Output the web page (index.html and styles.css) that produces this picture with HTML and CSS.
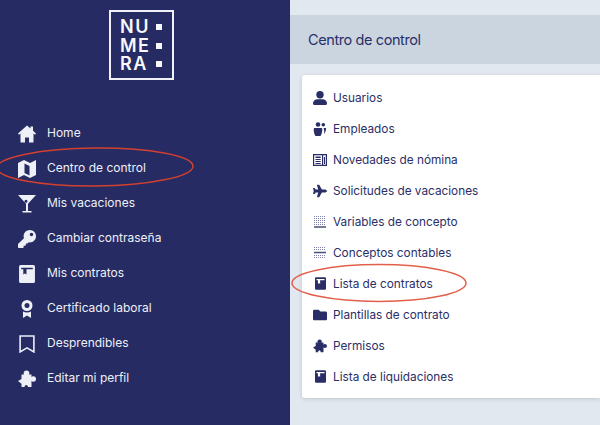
FILE: index.html
```html
<!DOCTYPE html>
<html lang="es">
<head>
    <meta charset="UTF-8">
    <title>Centro de control</title>
    <link rel="stylesheet" href="styles.css">
</head>
<body>
    <svg width="0" height="0" class="defs">
        <symbol id="i-home" viewBox="0 0 18 17"><path d="M9 0l3.500 3V1h2.500v4.300L18 8l-1 1.200-1.500-1.200v9H11v-5H7v5H2.500V8L1 9.200 0 8z"/></symbol>
        <symbol id="i-map" viewBox="0 0 18 18"><path fill-rule="evenodd" d="M0 3l6-3 6 3 6-3v15l-6 3-6-3-6 3zM6.500 3.500v9.500l5 2.500V6z"/></symbol>
        <symbol id="i-glass" viewBox="0 0 18 18"><path fill-rule="evenodd" d="M0 0h18l-8 8.800V16h3.500v1.500h-9V16H8V8.800zM8 4.800a1.500 1.500 0 1 0 0 3 1.500 1.500 0 0 0 0-3z"/></symbol>
        <symbol id="i-key" viewBox="0 0 512 512"><path d="M512 176.001C512 273.203 433.202 352 336 352c-11.22 0-22.19-1.062-32.827-3.069l-24.012 27.014A23.999 23.999 0 0 1 261.223 384H224v40c0 13.255-10.745 24-24 24h-40v40c0 13.255-10.745 24-24 24H24c-13.255 0-24-10.745-24-24v-78.059c0-6.365 2.529-12.47 7.029-16.971l161.802-161.802C163.108 213.814 160 195.271 160 176 160 78.798 238.797.001 335.999 0 433.488-.001 512 78.511 512 176.001zM336 128c0 26.51 21.49 48 48 48s48-21.49 48-48-21.49-48-48-48-48 21.49-48 48z"/></symbol>
        <symbol id="i-book" viewBox="0 0 15 17"><path fill-rule="evenodd" d="M1.500 0h12A1.500 1.500 0 0 1 15 1.500v14a1.500 1.500 0 0 1-1.500 1.500h-12A1.500 1.500 0 0 1 0 15.500v-14A1.500 1.500 0 0 1 1.500 0zM2 2.500V4h2v5l1.500-1L7 9V4h6V2.500z"/></symbol>
        <symbol id="i-award" viewBox="0 0 12 18"><path fill-rule="evenodd" d="M6 0a5.500 5.500 0 1 1 0 11A5.500 5.500 0 0 1 6 0zm0 3a2.500 2.500 0 1 0 0 5 2.500 2.500 0 0 0 0-5z"/><path d="M2 11.500c2.500 1.200 5.500 1.200 8 0V18l-4-2.500L2 18z"/></symbol>
        <symbol id="i-bookmark" viewBox="0 0 15 17"><path fill="none" stroke="currentColor" stroke-width="1.500" d="M1 1h13v15l-6.500-3.800L1 16z"/></symbol>
        <symbol id="i-puzzle" viewBox="0 0 18 17"><circle cx="8.500" cy="2.800" r="2.800"/><circle cx="15.300" cy="8.500" r="2.700"/><path d="M0 10.500l3.500-2V4h10v12.500H10c0-2.800-3.500-2.800-3.500 0h-3v-3.300z"/></symbol>
        <symbol id="i-user" viewBox="0 0 14 14"><circle cx="7" cy="3.700" r="3.700"/><path d="M0 12.500C0 9.800 2.300 8.300 5 8.300h4c2.700 0 5 1.500 5 4.200 0 .9-.6 1.500-1.500 1.500h-11C.6 14 0 13.400 0 12.500z"/></symbol>
        <symbol id="i-users" viewBox="0 0 14 14"><circle cx="5" cy="2.500" r="2.300"/><circle cx="10.300" cy="2.800" r="1.800"/><path d="M2 6h6c.8 0 1.300.5 1.300 1.200 0 3-1.100 6.800-2.300 6.800H3c-1.200 0-2.300-3.800-2.300-6.800C.7 6.500 1.200 6 2 6zM10.500 6h1.800c.6 0 .9.400.8.900-.3 1.900-.9 4-2 5.100.3-2 .3-4.200-.6-6z"/></symbol>
        <symbol id="i-news" viewBox="0 0 14 14"><path fill-rule="evenodd" d="M0 1h14v12H0zM1.200 2.200v9.600h7.800V2.200zM10.200 2.200v9.600h2.600V2.200z"/><path d="M2.500 3.500h5.200v1.500H2.500zM2.500 6h5.200v1H2.500zM2.500 8h5.200v1H2.500zM2.500 10h5.200v1H2.500zM11 4h1v7h-1z"/></symbol>
        <symbol id="i-plane" viewBox="0 0 576 512"><path d="M480 192H365.710L260.610 8.060A16.014 16.014 0 0 0 246.710 0h-65.500c-10.630 0-18.300 10.170-15.380 20.390L214.860 192H112l-43.200-57.600c-3.020-4.030-7.770-6.400-12.800-6.400H16.010C5.600 128-2.040 137.780.49 147.880L32 256 .49 364.120C-2.040 374.220 5.600 384 16.010 384H56c5.040 0 9.780-2.370 12.800-6.400L112 320h102.860l-49.030 171.600c-2.920 10.220 4.750 20.400 15.380 20.400h65.500c5.740 0 11.040-3.080 13.890-8.060L365.710 320H480c35.350 0 96-28.650 96-64s-60.650-64-96-64z"/></symbol>
        <symbol id="i-grid-b" viewBox="0 0 14 14"><path d="M1 1.500h12M1 3.500h12M1 5.500h12M1 7.500h12M1 9.500h12" fill="none" stroke="currentColor" stroke-dasharray="1 1" opacity="0.6"/><path d="M1 12h12" fill="none" stroke="currentColor" stroke-width="1.500" opacity="0.85"/></symbol>
        <symbol id="i-grid-c" viewBox="0 0 14 14"><path d="M1 1.500h12M1 3.500h12M1 9.500h12M1 11.500h12" fill="none" stroke="currentColor" stroke-dasharray="1 1" opacity="0.6"/><path d="M1 6.500h12" fill="none" stroke="currentColor" stroke-width="1.500" opacity="0.85"/></symbol>
        <symbol id="i-folder" viewBox="0 0 512 512"><path d="M464 128H272l-64-64H48C21.490 64 0 85.490 0 112v288c0 26.510 21.490 48 48 48h416c26.510 0 48-21.490 48-48V176c0-26.510-21.490-48-48-48z"/></symbol>
    </svg>

    <div class="layout">
        <aside class="sidebar">
            <div class="logo">
                <div class="logo-row"><span class="logo-text">NU</span><i class="logo-dot"></i></div>
                <div class="logo-row"><span class="logo-text">ME</span><i class="logo-dot"></i></div>
                <div class="logo-row"><span class="logo-text">RA</span><i class="logo-dot"></i></div>
            </div>
            <nav class="side-nav">
                <a class="side-item"><span class="side-icon"><svg class="w18"><use href="#i-home"/></svg></span>Home</a>
                <a class="side-item"><span class="side-icon"><svg class="w18"><use href="#i-map"/></svg></span>Centro de control</a>
                <a class="side-item"><span class="side-icon"><svg class="w18"><use href="#i-glass"/></svg></span>Mis vacaciones</a>
                <a class="side-item"><span class="side-icon"><svg class="w18"><use href="#i-key"/></svg></span>Cambiar contraseña</a>
                <a class="side-item"><span class="side-icon"><svg class="w16"><use href="#i-book"/></svg></span>Mis contratos</a>
                <a class="side-item"><span class="side-icon"><svg class="w12"><use href="#i-award"/></svg></span>Certificado laboral</a>
                <a class="side-item"><span class="side-icon"><svg class="w16"><use href="#i-bookmark"/></svg></span>Desprendibles</a>
                <a class="side-item"><span class="side-icon"><svg class="w18"><use href="#i-puzzle"/></svg></span>Editar mi perfil</a>
            </nav>
        </aside>

        <main class="content">
            <header class="page-header">Centro de control</header>
            <section class="card">
                <a class="card-item"><span class="card-icon"><svg><use href="#i-user"/></svg></span>Usuarios</a>
                <a class="card-item"><span class="card-icon"><svg><use href="#i-users"/></svg></span>Empleados</a>
                <a class="card-item"><span class="card-icon"><svg><use href="#i-news"/></svg></span>Novedades de nómina</a>
                <a class="card-item"><span class="card-icon"><svg><use href="#i-plane"/></svg></span>Solicitudes de vacaciones</a>
                <a class="card-item"><span class="card-icon"><svg><use href="#i-grid-b"/></svg></span>Variables de concepto</a>
                <a class="card-item"><span class="card-icon"><svg><use href="#i-grid-c"/></svg></span>Conceptos contables</a>
                <a class="card-item"><span class="card-icon"><svg class="book"><use href="#i-book"/></svg></span>Lista de contratos</a>
                <a class="card-item"><span class="card-icon"><svg><use href="#i-folder"/></svg></span>Plantillas de contrato</a>
                <a class="card-item"><span class="card-icon"><svg><use href="#i-puzzle"/></svg></span>Permisos</a>
                <a class="card-item"><span class="card-icon"><svg class="book"><use href="#i-book"/></svg></span>Lista de liquidaciones</a>
            </section>
        </main>
    </div>

    <!-- anotaciones a mano sobre la captura -->
    <svg class="marks" width="600" height="425" viewBox="0 0 600 425">
        <ellipse class="mark-dark" cx="95" cy="167" rx="98" ry="19" transform="rotate(-0.5 95 167)"/>
        <ellipse class="mark-light" cx="379" cy="283" rx="87" ry="18.500"/>
    </svg>
</body>
</html>
```

FILE: styles.css
```css
* {
    box-sizing: border-box;
}

body {
    margin: 0;
    width: 600px;
    height: 425px;
    overflow: hidden;
    position: relative;
    font-family: 'Inter', 'Liberation Sans', sans-serif;
    background-color: #e2e8f0;
}

.defs {
    position: absolute;
}

.layout {
    display: flex;
    height: 425px;
}

.sidebar {
    width: 290px;
    flex-shrink: 0;
    padding-top: 10px;
    background-color: #272b63;
    color: #edf0f7;
}

.logo {
    width: 65px;
    height: 70px;
    margin-left: 109px;
    padding: 6px 0 0 9px;
    border: 2px solid #f1f2f7;
    color: #f7f8fb;
}

.logo-row {
    display: flex;
    align-items: center;
    height: 18.500px;
}

.logo-text {
    width: 36px;
    font-size: 18px;
    font-weight: 600;
    letter-spacing: 1.5px;
    line-height: 18px;
}

.logo-dot {
    width: 6px;
    height: 6px;
    background-color: #f7f8fb;
}

.side-nav {
    margin-top: 35px;
}

.side-item {
    display: flex;
    align-items: center;
    height: 35px;
    padding-left: 17px;
    font-size: 12px;
}

.side-icon {
    display: flex;
    justify-content: center;
    width: 20px;
    margin-right: 10px;
}

.side-icon svg {
    fill: currentColor;
    height: 18px;
    margin-top: 2px;
}

.w18 {
    width: 18px;
}

.w16 {
    width: 16px;
}

.w12 {
    width: 12px;
}

.content {
    flex: 1;
    padding-top: 15px;
}

.page-header {
    display: flex;
    align-items: center;
    height: 49px;
    padding-left: 18px;
    background-color: #cbd5e0;
    color: #2a2e66;
    font-size: 14.500px;
    letter-spacing: -0.4px;
}

.card {
    margin: 11px 0 0 12px;
    padding: 7px 0 6px;
    background-color: white;
    border-radius: 3px 0 0 3px;
    box-shadow: 0 1px 4px rgba(0,0,0,0.15);
    color: #2a2e66;
}

.card-item {
    display: flex;
    align-items: center;
    height: 31px;
    padding-left: 11px;
    font-size: 11.800px;
}

.card-icon {
    display: flex;
    justify-content: center;
    width: 14px;
    margin-right: 6px;
}

.card-icon svg {
    width: 14px;
    height: 14px;
    fill: currentColor;
}

.card-icon svg.book {
    width: 11px;
    height: 13px;
}

.marks {
    position: absolute;
    left: 0;
    top: 0;
    pointer-events: none;
}

.mark-dark {
    fill: none;
    stroke: #d2402f;
    stroke-width: 1.5;
}

.mark-light {
    fill: none;
    stroke: #e2604a;
    stroke-width: 1.5;
}
```
